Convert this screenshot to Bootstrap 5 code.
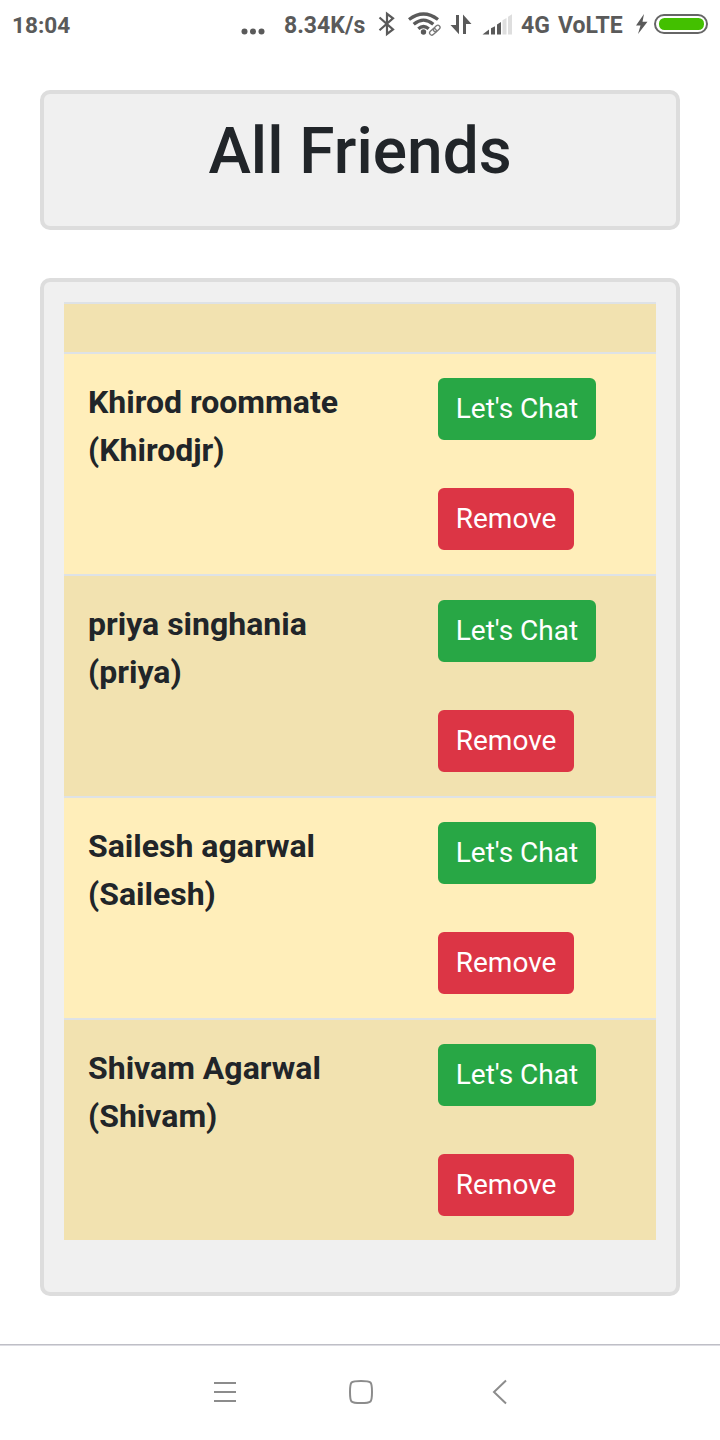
<!DOCTYPE html>
<html lang="en">
<head>
<meta charset="utf-8">
<meta name="viewport" content="width=device-width, initial-scale=1">
<title>All Friends</title>
<link href="https://cdn.jsdelivr.net/npm/bootstrap@5.3.0/dist/css/bootstrap.min.css" rel="stylesheet">
<style>
body{font-family:Roboto,"Liberation Sans",sans-serif;font-size:32px;line-height:48px;color:#212529;background:#fff}
.screen{height:1440px;overflow:hidden}
.status{height:50px;padding:0 12px;font-size:23px;font-weight:700;line-height:48px;color:#5a5a5a;white-space:nowrap}
.status svg{display:block;flex:none}
.status span{padding-top:2px}
.status .clock{width:229px;font-size:22.6px}
.status .speed{width:92px;margin-left:19px}
.status .carrier{width:115px;word-spacing:2.5px}
.panel{margin:0 40px;background:#f0f0f0;border:4px solid #ddd;border-radius:10px;padding:20px}
.title-panel{margin-top:40px;height:140px}
.title-panel h1{font-size:64px;font-weight:500;line-height:76.8px}
.list-panel{margin-top:48px;height:1018px}
.friend{height:222px;padding:24px;border-top:2px solid #dee2e6;background:#ffeeba}
.friend:nth-child(odd){background:#f2e2b0}
.friend.blank{height:50px}
.friend .name{width:350px;font-weight:700}
.friend .btn{font-size:28px;line-height:42px;padding:8px 15.75px;border-width:2px;border-radius:6px}
.actions{gap:48px}
.btn-chat{--bs-btn-color:#fff;--bs-btn-bg:#28a745;--bs-btn-border-color:#28a745}
.btn-remove{--bs-btn-color:#fff;--bs-btn-bg:#dc3545;--bs-btn-border-color:#dc3545}
.softkeys{margin-top:48px;height:96px;border-top:1px solid #bfbfc6;box-shadow:inset 0 1px #dcdce2;padding-left:213px}
</style>
</head>
<body>
<div class="screen d-flex flex-column">
  <header class="status d-flex align-items-center">
    <span class="clock">18:04</span>
    <svg width="24" height="50" fill="#5a5a5a"><circle cx="3.5" cy="31.5" r="3"/><circle cx="12" cy="31.5" r="3"/><circle cx="20.500" cy="31.5" r="3"/></svg>
    <span class="speed">8.34K/s</span>
    <!-- bluetooth, wifi, data arrows, signal -->
    <svg width="145" height="50" viewBox="376 0 145 50" fill="none" stroke="#5a5a5a">
      <path d="M379.500 17.500L393 29.500L387 34V13.800L393 18.300L379.500 30.300" stroke-width="2.200"/>
      <g stroke-width="3.300">
        <path d="M409 19.500Q423.500 8.500 438 19.500"/>
        <path d="M413.700 24.200Q423.500 16 433.300 24.200"/>
        <path d="M418.300 28.700Q423.500 24.300 428.700 28.700"/>
      </g>
      <circle cx="423.500" cy="32" r="2.700" fill="#5a5a5a" stroke="none"/>
      <g transform="rotate(-40 435 30.500)" stroke="#fff" stroke-width="4"><rect x="429" y="28.500" width="12" height="4"/></g>
      <g transform="rotate(-42 435 30)" stroke="#777" stroke-width="1.300"><rect x="428.500" y="27.800" width="7.500" height="4.400" rx="2.200"/><rect x="433.500" y="27.800" width="7.500" height="4.400" rx="2.200"/></g>
      <g fill="#5a5a5a" stroke="none">
        <path d="M456 15h3v19.200L450.500 25H456z"/><path d="M463 34V14.500l8.500 9.500H466v10z"/>
        <path d="M482.500 34.500L489 29.500V34.500zM491 28.200l4-2V34.500h-4zM497 24.500l4-2.500V34.500h-4z"/>
        <path fill="#dedede" d="M502.500 20.300l4-2.300V34.500h-4zM508 16.800l4-2.500V34.500h-4z"/>
      </g>
    </svg>
    <span class="carrier">4G VoLTE</span>
    <svg width="72" height="50" viewBox="636 0 72 50">
      <path d="M644 14L636 25.500H640.500L638 34L647.500 21.800H642.500z" fill="#5a5a5a"/>
      <rect x="655" y="15" width="52" height="18" rx="9" fill="#fff" stroke="#666" stroke-width="2"/>
      <rect x="659" y="18" width="45" height="12" rx="5.500" fill="#43c000"/>
    </svg>
  </header>

  <section class="panel title-panel flex-shrink-0 text-center"><h1 class="m-0">All Friends</h1></section>

  <main class="panel list-panel flex-shrink-0">
    <div class="friend blank"></div>
    <div class="friend d-flex">
      <div class="name">Khirod roommate<br>(Khirodjr)</div>
      <div class="actions d-flex flex-column align-items-start"><button class="btn btn-chat">Let's Chat</button><button class="btn btn-remove">Remove</button></div>
    </div>
    <div class="friend d-flex">
      <div class="name">priya singhania<br>(priya)</div>
      <div class="actions d-flex flex-column align-items-start"><button class="btn btn-chat">Let's Chat</button><button class="btn btn-remove">Remove</button></div>
    </div>
    <div class="friend d-flex">
      <div class="name">Sailesh agarwal<br>(Sailesh)</div>
      <div class="actions d-flex flex-column align-items-start"><button class="btn btn-chat">Let's Chat</button><button class="btn btn-remove">Remove</button></div>
    </div>
    <div class="friend d-flex">
      <div class="name">Shivam Agarwal<br>(Shivam)</div>
      <div class="actions d-flex flex-column align-items-start"><button class="btn btn-chat">Let's Chat</button><button class="btn btn-remove">Remove</button></div>
    </div>
  </main>

  <nav class="softkeys flex-shrink-0 d-flex align-items-center" aria-label="System">
    <svg width="295" height="30" viewBox="213 1378 295 30" fill="none" stroke="#8c8c8c" stroke-width="2">
      <path d="M214 1383h22M214 1392h22M214 1401h22"/>
      <path d="M361 1381C371.500 1381 372 1381.500 372 1392S371.500 1403 361 1403S350 1402.500 350 1392S350.500 1381 361 1381z"/>
      <path d="M506 1380.500L494 1392L506 1403.500"/>
    </svg>
  </nav>
</div>
<script src="https://cdn.jsdelivr.net/npm/bootstrap@5.3.0/dist/js/bootstrap.bundle.min.js"></script>
</body>
</html>
